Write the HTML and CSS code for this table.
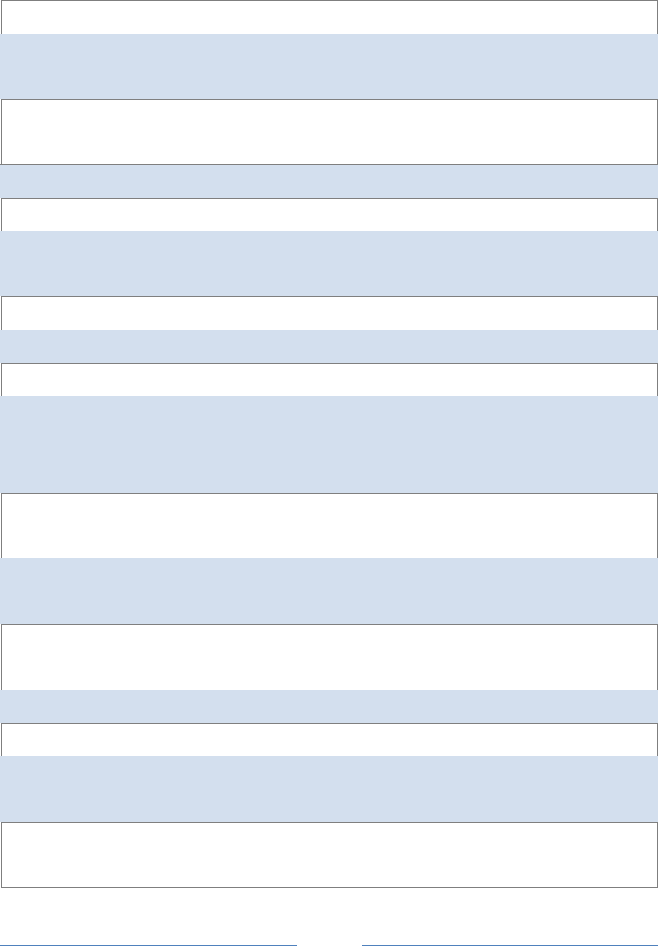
FILE: index.html
```html
<!DOCTYPE html>
<html lang="en">
<head>
  <meta charset="UTF-8" />
  <meta name="viewport" content="width=device-width, initial-scale=1.0" />
  <title>Table</title>
  <link rel="stylesheet" href="styles.css">
</head>
<body>
  <div class="sheet">
    <div class="row plain first h34"></div>
    <div class="row shade h65"></div>
    <div class="row plain h65"></div>
    <div class="row shade ruled h34"></div>
    <div class="row plain h33"></div>
    <div class="row shade h65"></div>
    <div class="row plain h34"></div>
    <div class="row shade h33"></div>
    <div class="row plain h33"></div>
    <div class="row shade h97"></div>
    <div class="row plain h65"></div>
    <div class="row shade h66"></div>
    <div class="row plain h66"></div>
    <div class="row shade h33"></div>
    <div class="row plain h33"></div>
    <div class="row shade h66"></div>
    <div class="row plain last h66"></div>
  </div>
  <div class="footer-rules">
    <div class="rule left"></div>
    <div class="rule right"></div>
  </div>
</body>
</html>
```
FILE: styles.css
```css
* {
  box-sizing: border-box;
}
body {
  margin: 0;
  font-family: "Liberation Sans", Arial, sans-serif;
  background: #ffffff;
}
.sheet {
  width: 658px;
  display: flex;
  flex-direction: column;
}
.row {
  width: 100%;
}
.plain {
  background: #ffffff;
  border-top: 1px solid #7f7f7f;
  border-left: 1px solid #7f7f7f;
  border-right: 1px solid #7f7f7f;
  margin: 0 0 0 1px;
  width: auto;
}
.shade {
  background: #d3dfee;
}
.shade.ruled {
  border-top: 1px solid #7f7f7f;
}
.plain.last {
  border-bottom: 1px solid #7f7f7f;
}
.h33 { height: 33px; }
.h34 { height: 34px; }
.h65 { height: 65px; }
.h66 { height: 66px; }
.h97 { height: 97px; }
.footer-rules {
  display: flex;
  justify-content: space-between;
  margin-top: 57px;
  width: 658px;
}
.rule {
  height: 2px;
  background: #4f81bd;
}
.rule.left {
  width: 297px;
}
.rule.right {
  width: 296px;
}
```
